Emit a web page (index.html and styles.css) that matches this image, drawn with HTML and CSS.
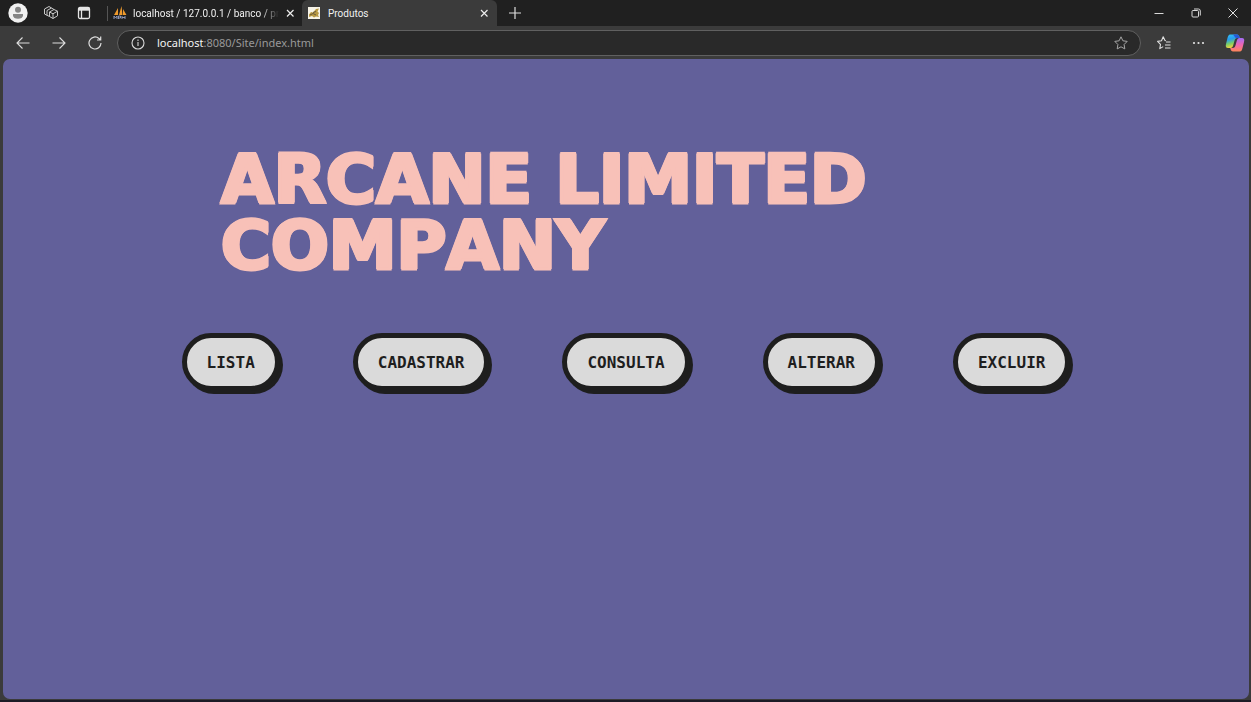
FILE: index.html
```html
<!DOCTYPE html>
<html lang="pt-BR">
<head>
<meta charset="utf-8">
<title>Produtos</title>
<link rel="stylesheet" href="styles.css">
</head>
<body>
<header class="tabbar">
  <div class="tools">
    <button class="icon" aria-label="Perfil"><svg width="20" height="20" viewBox="0 0 20 20"><circle cx="10" cy="10" r="9.7" fill="#f1f1f1"/><circle cx="10" cy="6.7" r="3" fill="#858585"/><path d="M5 11h10v1.500c0 2-2.200 3.300-5 3.300s-5-1.300-5-3.300z" fill="#858585"/></svg></button>
    <button class="icon" aria-label="Workspaces"><svg width="16" height="16" viewBox="0 0 16 16" fill="none" stroke="#c8c8c8" stroke-linejoin="round"><path d="M6.500 7 11 4.500l3.500 1.700v4.600L10 13.500l-3.500-2zM6.500 7l3.500 1.800 4.500-2.600M10 8.800v4.700M6.500 11.500 4 10.300V5.500L8.500 3 11 4.500M4 10.300 1.500 9V4L6 1.500 8.500 3"/></svg></button>
    <button class="icon" aria-label="Guias verticais"><svg width="14" height="14" viewBox="0 0 14 14" fill="none" stroke="#e6e6e6" stroke-width="1.300"><rect x="1.500" y="1.500" width="11" height="11" rx="1.500"/><path d="M1.500 3.200h11" stroke-width="3"/><path d="M4.500 4v8"/></svg></button>
  </div>
  <div class="tab">
    <svg class="favicon" width="14" height="14" viewBox="0 0 14 14"><path d="M1 9 5 2v7zM6 9 8.500 0 9.500 9zM10 9V3l3.500 6z" fill="#ef9a2d"/><path d="M1 13v-3l1.500 2L4 10v3M5.500 13v-3h2v2h-2M9 10v3M9 11.500h3M12 10v3" stroke="#8d96b5" fill="none"/></svg>
    <span class="tab-title fade">localhost / 127.0.0.1 / banco / pro</span>
    <button class="icon" aria-label="Fechar guia"><svg width="10" height="10" viewBox="0 0 10 10" stroke="#ededed" stroke-width="1.200"><path d="m2 2 6.500 6.500m0-6.500L2 8.500"/></svg></button>
  </div>
  <div class="tab active">
    <svg class="favicon" width="12" height="12" viewBox="0 0 12 12"><path d="M0 0h12v12H0z" fill="#f7f4e8"/><path d="M1 7.500 3 5l2 .5L8 2l3-.5-1.500 3L11 6l-1 2 1 2-3-.5-2 1L4 9l-3 1z" fill="#b99a43"/><path d="m2 8 3-1.500L8 8M5 5.500l3-1" stroke="#66583c" fill="none"/></svg>
    <span class="tab-title">Produtos</span>
    <button class="icon" aria-label="Fechar guia"><svg width="10" height="10" viewBox="0 0 10 10" stroke="#ededed" stroke-width="1.200"><path d="m2 2 6.500 6.500m0-6.500L2 8.500"/></svg></button>
  </div>
  <button class="icon new-tab" aria-label="Nova guia"><svg width="12" height="12" viewBox="0 0 12 12" stroke="#dedede" stroke-width="1.200"><path d="M6 0v12M0 6h12"/></svg></button>
  <div class="window">
    <button class="icon" aria-label="Minimizar"><svg width="10" height="10" viewBox="0 0 10 10" stroke="#d8d8d8"><path d="M.5 5.500h9"/></svg></button>
    <button class="icon" aria-label="Restaurar"><svg width="10" height="10" viewBox="0 0 10 10" fill="none" stroke="#d8d8d8"><rect x="1" y="2.500" width="6.500" height="6.500" rx="1"/><path d="M3 1h4.500Q9.300 1 9.300 3v4.500"/></svg></button>
    <button class="icon" aria-label="Fechar"><svg width="10" height="10" viewBox="0 0 10 10" stroke="#e0e0e0"><path d="m.5.5 9 9m0-9-9 9"/></svg></button>
  </div>
</header>
<nav class="toolbar" aria-label="Navegador">
  <div class="history">
    <button class="icon" aria-label="Voltar"><svg width="14" height="14" viewBox="0 0 14 14" fill="none" stroke="#dedede" stroke-width="1.100"><path d="M13.500 7H1M6.500 1.500 1 7l5.500 5.500"/></svg></button>
    <button class="icon" aria-label="Avançar"><svg width="14" height="14" viewBox="0 0 14 14" fill="none" stroke="#dedede" stroke-width="1.100"><path d="M.5 7H13M7.500 1.500 13 7l-5.500 5.500"/></svg></button>
    <button class="icon" aria-label="Atualizar"><svg width="14" height="14" viewBox="0 0 14 14" fill="none" stroke="#dedede" stroke-width="1.200"><path d="M13 7a6 6 0 1 1-2-4.500l1.500 1.500M12.700.5V4H9"/></svg></button>
  </div>
  <div class="address">
    <svg width="14" height="14" viewBox="0 0 14 14" fill="none" stroke="#d8d8d8" stroke-width="1.100"><circle cx="7" cy="7" r="6"/><path d="M7 6v4M7 3.500V5"/></svg>
    <a class="url" href="#"><span class="host">localhost</span>:8080/Site/index.html</a>
    <button class="icon" aria-label="Adicionar aos favoritos"><svg width="14" height="14" viewBox="0 0 14 14" fill="none" stroke="#a5a5a5" stroke-linejoin="round"><path d="m7 .8 1.900 4 4.300.6-3.100 3.100.7 4.400L7 10.800l-3.800 2.100.7-4.400L.8 5.400l4.300-.6z"/></svg></button>
  </div>
  <div class="actions">
    <button class="icon" aria-label="Favoritos"><svg width="14" height="14" viewBox="0 0 14 14" fill="none" stroke="#e0e0e0" stroke-width="1.100" stroke-linejoin="round"><path d="M9 4.800 8 4.500 6.200.8l-1.700 4-3.900.6 2.900 3-.7 4.200 3.400-2M9 6h4.500M8 9h5.500M8 12h5.500"/></svg></button>
    <button class="icon" aria-label="Configurações e mais"><svg width="14" height="4" viewBox="0 0 14 4" fill="#e4e4e4"><circle cx="3" cy="2" r="1.100"/><circle cx="7.500" cy="2" r="1.100"/><circle cx="12" cy="2" r="1.100"/></svg></button>
    <button class="icon" aria-label="Copilot"><svg width="20" height="20" viewBox="0 0 20 20">
      <defs><linearGradient id="cool" x2=".3" y2="1"><stop stop-color="#36c5f5"/><stop offset=".4" stop-color="#279cf0"/><stop offset=".7" stop-color="#78cf67"/><stop offset="1" stop-color="#f7d13e"/></linearGradient><linearGradient id="warm" x2="0" y2="1"><stop stop-color="#a06df5"/><stop offset=".5" stop-color="#ef65b2"/><stop offset="1" stop-color="#ff8658"/></linearGradient></defs>
      <path d="M5 1.500h7q2 0 2.800 3.500h-2.500Q10 5 9.400 8L8 13q-.6 2-2.500 2H3Q0 15 1 11l1.500-6q.8-3.500 2.500-3.500z" fill="url(#cool)"/>
      <path d="M8 1.500h4q2 0 2.800 3.500h-3q-1.500 0-2.300-1.500z" fill="#2758d7"/>
      <path d="M15 18.500H8q-2 0-2.800-3.500h2.500q2.300 0 2.900-3L12 7q.6-2 2.500-2H17q3 0 2 4l-1.500 6q-.8 3.500-2.500 3.500z" fill="url(#warm)"/></svg></button>
  </div>
</nav>
<main class="page">
  <h1 class="brand">ARCANE LIMITED COMPANY</h1>
  <nav class="menu" aria-label="Produtos">
    <button class="pill">LISTA</button>
    <button class="pill">CADASTRAR</button>
    <button class="pill">CONSULTA</button>
    <button class="pill">ALTERAR</button>
    <button class="pill">EXCLUIR</button>
  </nav>
</main>
</body>
</html>
```
FILE: styles.css
```css
* { box-sizing: border-box; }

body {
  margin: 0;
  min-height: 100vh;
  display: flex;
  flex-direction: column;
  background: #3b3b3b;
  border-bottom: 2px solid #1c1b25;
  font-family: "Noto Sans", sans-serif;
}

button { font: inherit; }

svg { display: block; flex: none; }

.icon {
  display: grid;
  place-items: center;
  padding: 0;
  border: 0;
  background: none;
}

.tabbar {
  display: flex;
  align-items: center;
  height: 26px;
  background: #202020;
  color: #f0f0f0;
  font-family: Roboto, sans-serif;
  font-size: 10px;
}

.tools {
  display: flex;
  align-items: center;
  gap: 13px;
  width: 107px;
  padding-left: 8px;
}

.tools .icon { width: 20px; }

.tab {
  display: flex;
  align-items: center;
  gap: 6px;
  width: 195px;
  height: 15px;
  padding: 0 7px 0 5px;
  border-left: 1px solid #555;
}

.tab.active {
  height: 26px;
  padding: 0 8px 0 6px;
  gap: 8px;
  border: 0;
  border-radius: 6px 6px 0 0;
  background: #3b3b3b;
}

.tab-title {
  flex: 1;
  min-width: 0;
  white-space: nowrap;
}

.fade {
  mask-image: linear-gradient(to right, #000 88%, transparent);
}

.new-tab { margin-left: 12px; }

.window {
  display: flex;
  gap: 27px;
  margin-left: auto;
  padding-right: 13px;
}

.toolbar {
  display: flex;
  align-items: center;
  height: 33px;
}

.history {
  display: flex;
  gap: 22px;
  width: 117px;
  padding-left: 16px;
}

.address {
  flex: 1;
  display: flex;
  align-items: center;
  gap: 12px;
  height: 26px;
  padding: 0 12px 0 13px;
  border: 1px solid #606060;
  border-radius: 13px;
  background: #292929;
}

.url {
  flex: 1;
  color: #999;
  font-size: 11px;
  text-decoration: none;
}

.host { color: #f4f4f4; }

.actions {
  display: flex;
  align-items: center;
  gap: 20px;
  padding: 0 6px 0 16px;
}

.page {
  flex: 1;
  margin: 0 2px 1px 3px;
  padding: 88px 0;
  border-radius: 7px;
  background: #62609a;
}

.brand {
  width: 65%;
  margin: 0 auto;
  color: #f8c1b8;
  font-family: "DejaVu Sans", sans-serif;
  font-size: 68px;
  font-weight: 700;
  font-kerning: none;
  line-height: 66px;
  -webkit-text-stroke: 3px #f8c1b8;
  text-shadow: 2px 0 #f8c1b8, -2px 0 #f8c1b8;
}

.menu {
  display: flex;
  justify-content: center;
  flex-wrap: wrap;
  gap: 73px;
  margin-top: 54px;
}

.pill {
  height: 58px;
  padding: 0 20px;
  border: 5px solid #1e1e1e;
  border-radius: 29px;
  background: #dadada;
  box-shadow: 3px 3px 0 #1e1e1e;
  color: #1e1e1e;
  font-family: "DejaVu Sans Mono", monospace;
  font-size: 16px;
  font-weight: 700;
}
```
